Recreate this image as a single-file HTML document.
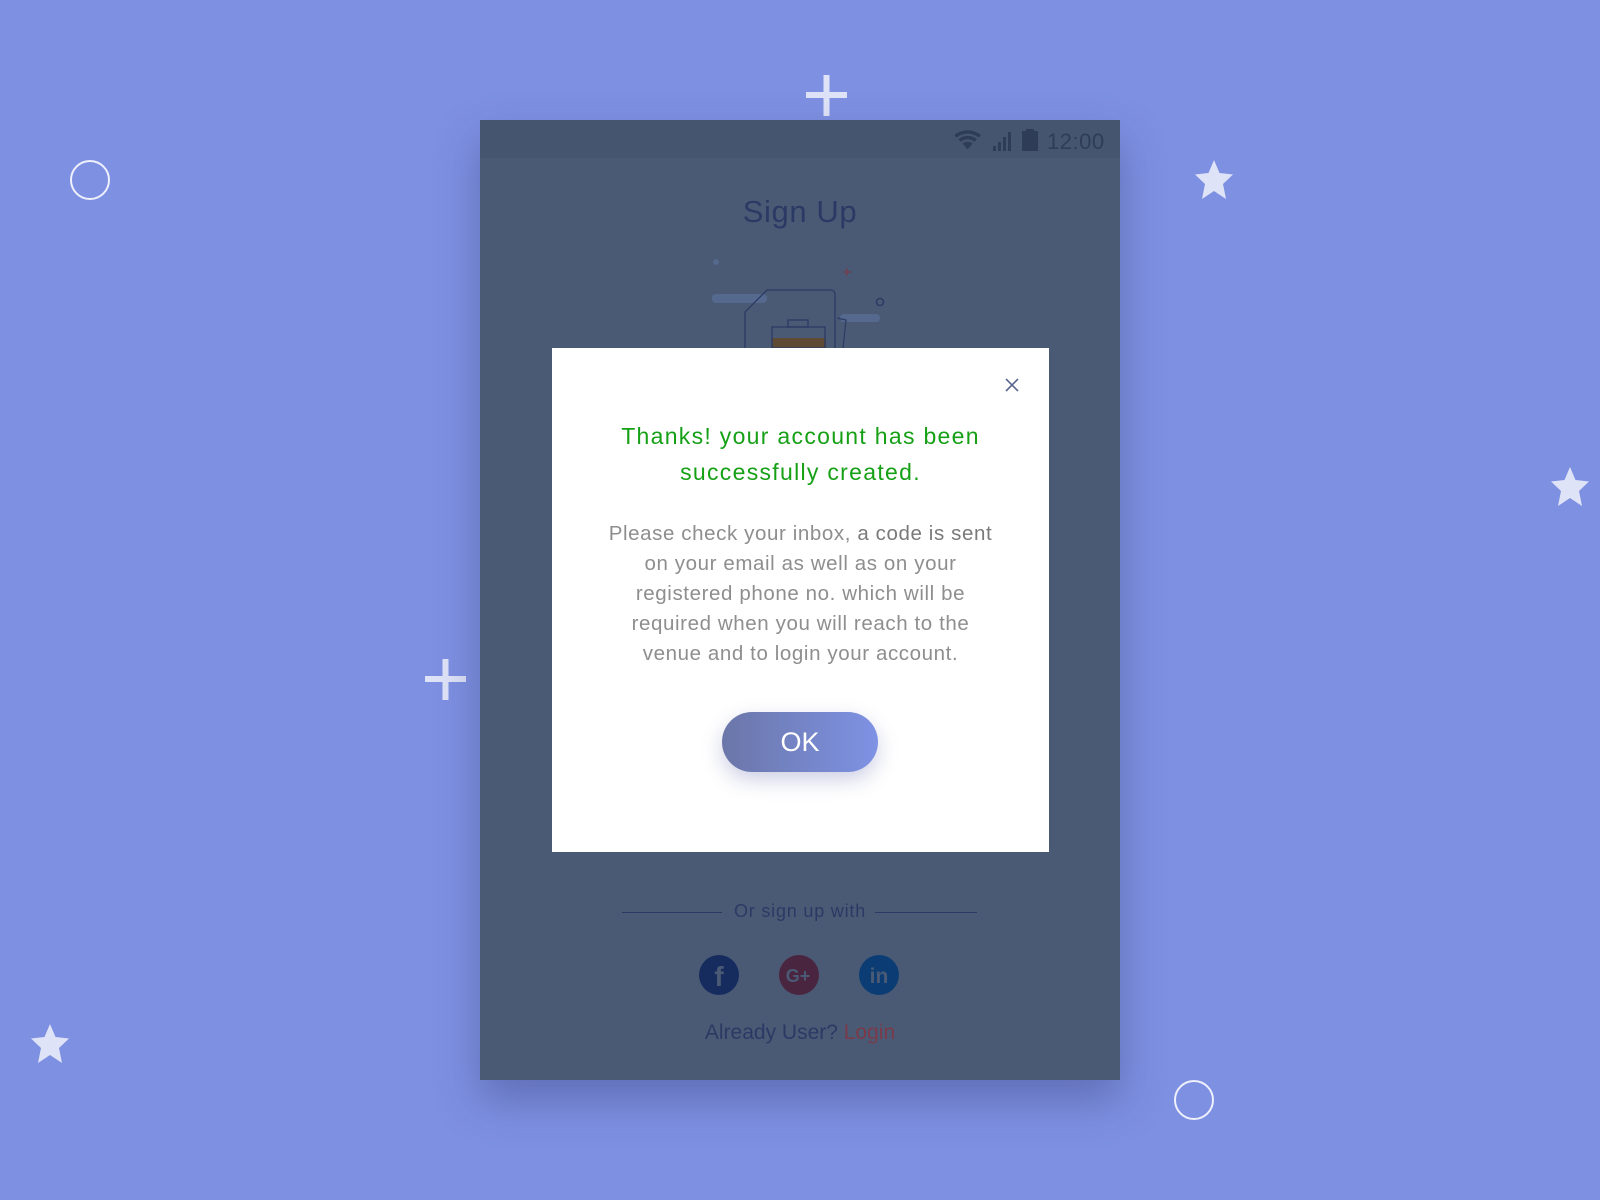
<!DOCTYPE html>
<html><head><meta charset="utf-8"><style>
*{margin:0;padding:0;box-sizing:border-box}
body{width:1600px;height:1200px;background:#7e90e2;position:relative;overflow:hidden;font-family:"Liberation Sans",sans-serif}
.a{position:absolute}
.card{left:480px;top:120px;width:640px;height:960px;background:#4a5a75;box-shadow:0 20px 40px rgba(40,50,100,.35)}
.status{left:0;top:0;width:640px;height:38px;background:#46556f}
.c{text-align:center;width:100%;left:0}
</style></head><body>
<svg class="a" style="left:0;top:0" width="1600" height="1200">
 <g fill="#dfe3f7">
  <rect x="806" y="92" width="41" height="6"/><rect x="823.5" y="75" width="6" height="41"/>
  <rect x="425" y="676" width="41" height="6"/><rect x="442.5" y="659" width="6" height="41"/>
  <polygon points="1214,160 1219.5,173 1233,174.5 1223,184 1226,199 1214,191 1202,199 1205,184 1195,174.5 1208.5,173"/>
  <polygon points="1570,467 1575.5,480 1589,481.5 1579,491 1582,506 1570,498 1558,506 1561,491 1551,481.5 1564.5,480"/>
  <polygon points="50,1024 55.5,1037 69,1038.5 59,1048 62,1063 50,1055 38,1063 41,1048 31,1038.5 44.5,1037"/>
 </g>
 <circle cx="90" cy="180" r="19" fill="none" stroke="#eef0fb" stroke-width="2"/>
 <circle cx="1194" cy="1100" r="19" fill="none" stroke="#eef0fb" stroke-width="2"/>
</svg>
<div class="a card">
 <div class="a status"></div>
 <svg class="a" style="left:475px;top:6px" width="165" height="28">
  <path d="M0 7 Q16 -4 32 7 L29 10 Q16 1 3 10Z M5 12 Q16 4 27 12 L24 15 Q16 9 8 15Z M10 17 Q16 13 22 17 L16 24Z" fill="#2f3c58" transform="translate(-1,3) scale(0.85)"/>
  <g fill="#2f3c58"><rect x="38" y="20" width="3" height="5"/><rect x="43" y="16" width="3" height="9"/><rect x="48" y="11" width="3" height="14"/><rect x="53" y="6" width="3" height="19"/></g>
  <rect x="67" y="5" width="16" height="20" fill="#2f3c58"/><rect x="71" y="3" width="8" height="3" fill="#2f3c58"/>
  <text x="92" y="23" font-size="22" fill="#2f3c58" font-family="Liberation Sans" letter-spacing="0.5">12:00</text>
 </svg>
 <div class="a c" style="top:74px;font-size:31px;color:#2b3a64;letter-spacing:.6px">Sign Up</div>
 <svg class="a" style="left:220px;top:132px" width="200" height="96">
  <circle cx="16" cy="10" r="3" fill="#55698e"/>
  <rect x="12" y="42" width="55" height="9" rx="4" fill="#55698e"/>
  <rect x="140" y="62" width="40" height="8" rx="4" fill="#55698e"/>
  <path d="M143 20h8M147 16v8" stroke="#7a3a4a" stroke-width="1.2"/>
  <circle cx="180" cy="50" r="3.5" fill="none" stroke="#2b3a64" stroke-width="1.5"/>
  <path d="M45 96V60L67 38H131a4 4 0 0 1 4 4V96" fill="none" stroke="#2b3a64" stroke-width="1.3"/>
  <path d="M137 66l9 2-3 28" fill="none" stroke="#2b3a64" stroke-width="1.2"/>
  <rect x="72" y="86" width="54" height="10" fill="#5e4a35"/>
  <rect x="72" y="75" width="53" height="21" fill="none" stroke="#2b3a64" stroke-width="1.3"/>
  <rect x="88" y="68" width="20" height="7" fill="none" stroke="#2b3a64" stroke-width="1.3"/>
 </svg>
 <div class="a" style="left:142px;top:792px;width:100px;height:1px;background:#2b3a64"></div>
 <div class="a" style="left:395px;top:792px;width:102px;height:1px;background:#2b3a64"></div>
 <div class="a c" style="top:781px;font-size:18px;color:#2b3a64;letter-spacing:.8px">Or sign up with</div>
 <svg class="a" style="left:219px;top:835px" width="200" height="42">
  <circle cx="20" cy="20" r="20" fill="#162c5f"/>
  <text x="20" y="31" font-size="28" font-weight="bold" fill="#4a5a75" text-anchor="middle">f</text>
  <circle cx="100" cy="20" r="20" fill="#4a2540"/>
  <text x="99" y="27" font-size="18" font-weight="bold" fill="#4a5a75" text-anchor="middle">G+</text>
  <circle cx="180" cy="20" r="20" fill="#0b3d74"/>
  <text x="180" y="28" font-size="21" font-weight="bold" fill="#4a5a75" text-anchor="middle">in</text>
 </svg>
 <div class="a c" style="top:901px;font-size:21px;color:#2b3a64">Already User? <span style="color:#7a3a4a">Login</span></div>
</div>
<div class="a" style="left:552px;top:348px;width:497px;height:504px;background:#fff">
 <svg class="a" style="left:453px;top:30px" width="14" height="14"><path d="M1 1L13 13M13 1L1 13" stroke="#5a6590" stroke-width="1.6"/></svg>
 <div class="a c" style="top:70px;font-size:23px;line-height:36px;color:#16a016;letter-spacing:1.3px">Thanks! your account has been<br>successfully created.</div>
 <div class="a c" style="top:171px;font-size:20.5px;line-height:30px;color:#8e8e8e;letter-spacing:.6px">Please check your inbox, <span style="color:#7a7a7a">a code is sent</span><br>on your email as well as on your<br>registered phone no. which will be<br>required when you will reach to the<br>venue and to login your account.</div>
 <div class="a" style="left:170px;top:364px;width:156px;height:60px;border-radius:30px;background:linear-gradient(90deg,#6b76a8,#7e92e4);box-shadow:0 8px 20px rgba(90,100,170,.3);color:#fff;font-size:27px;text-align:center;line-height:60px">OK</div>
</div>
</body></html>
